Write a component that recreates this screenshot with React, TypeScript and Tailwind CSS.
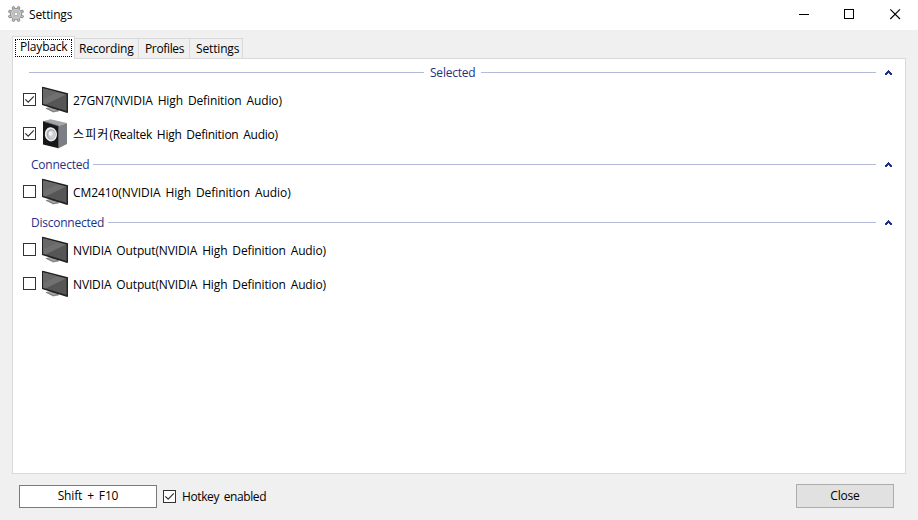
import React from "react";

function Gear() {
  return (
    <svg width="16" height="16" viewBox="0 0 16 16" className="block shrink-0">
      <g fill="#c6c6c6" stroke="#7c7c7c" strokeWidth="0.7">
        {[22.5, 67.5, 112.5, 157.5, 202.5, 247.5, 292.5, 337.5].map((a) => (
          <path key={a} d="M6.6 3.2 L6.9 .3 H9.1 L9.4 3.2Z" transform={`rotate(${a} 8 8)`} />
        ))}
        <circle cx="8" cy="8" r="5.5" />
      </g>
      <circle cx="8" cy="8" r="5.2" fill="#cacaca" />
      <circle cx="8" cy="8" r="3.3" fill="#dedede" stroke="#a5a5a5" strokeWidth="0.7" />
      <circle cx="8" cy="8" r="1.9" fill="#fff" stroke="#8c8c8c" strokeWidth="0.8" />
    </svg>
  );
}

function Monitor() {
  return (
    <svg width="26" height="28" viewBox="0 0 26 28" className="block shrink-0">
      <path d="M3.5 22.2 L9 20.6 L17.5 23.4 L16.5 25.4 L11 26.4Z" fill="#a6a6a6" />
      <path d="M4 22.3 L11.3 25.4 L16.5 24.6" fill="none" stroke="#6c6c6c" strokeWidth="0.8" />
      <path d="M9 19 L15 21 V23.4 L9 22Z" fill="#4a4a4a" />
      <path d="M0 .9 L.8 .8 L26 7.2 V26.4 L25.2 26.9 L0 18.9Z" fill="#222" />
      <path d="M1.2 2.5 L24.6 8.5 V25 L1.2 17.7Z" fill="#565656" />
      <path d="M1.2 2.5 L24 8.4 L3.5 18.4 L1.2 17.7Z" fill="#707070" />
      <path d="M1.2 2.5 L16 6.3 L1.2 13Z" fill="#686868" />
    </svg>
  );
}

function Speaker() {
  return (
    <svg width="26" height="30" viewBox="0 -1 26 30" className="block shrink-0">
      <path d="M1 1.2 L8.5 -.8 L25 3 L16.5 6Z" fill="#a3a5aa" />
      <path d="M16.5 6 L25 3 V24 L16.5 28.2Z" fill="#7c7e85" />
      <path d="M1 1.2 L16.5 6 V28.2 L1 24.4Z" fill="#171717" />
      <path d="M1 1.2 L16.5 6 V28.2" fill="none" stroke="#55575c" strokeWidth="0.7" />
      <ellipse cx="8.9" cy="14.3" rx="6.1" ry="7.1" fill="#e9ebed" transform="rotate(-8 8.9 14.3)" />
      <ellipse cx="9.1" cy="14.2" rx="4.5" ry="5.3" fill="#a9adb2" />
      <ellipse cx="9.7" cy="14.6" rx="3.5" ry="4.2" fill="#ced1d4" />
      <ellipse cx="8.6" cy="13.6" rx="1.9" ry="2.3" fill="#f2f3f4" />
    </svg>
  );
}

function Check({ on = false }: { on?: boolean }) {
  return (
    <span className="block h-[13px] w-[13px] shrink-0 border border-[#333] bg-white">
      {on && (
        <svg width="11" height="11" viewBox="0 0 11 11" className="block">
          <path d="M1.3 5.3 L4.2 8.2 L9.8 2.4" fill="none" stroke="#333" strokeWidth="1.2" />
        </svg>
      )}
    </span>
  );
}

function Chevron() {
  return (
    <svg width="7" height="5" viewBox="0 0 7 5" shapeRendering="crispEdges" className="block shrink-0" fill="#1e3287">
      <path d="M3 0H4V1H5V2H6V3H7V5H5V4H4V3H3V4H2V5H0V3H1V2H2V1H3Z" />
    </svg>
  );
}

function Header({ label, track, centered = false }: { label: string; track: string; centered?: boolean }) {
  return (
    <div className="flex h-6 items-center pt-[3px] pr-[13px] pl-4 text-[#1e3287]">
      {centered && <span className="h-px w-[395px] bg-[#b5b9da]" />}
      <span className={`whitespace-nowrap ${centered ? "w-[57px] pl-1.5" : "pl-0.5 pr-1"} ${track}`}>{label}</span>
      <span className="mr-[9px] h-px flex-1 bg-[#b5b9da]" />
      <Chevron />
    </div>
  );
}

function Row({ label, track, on = false, speaker = false }: { label: React.ReactNode; track: string; on?: boolean; speaker?: boolean }) {
  return (
    <div className="flex h-[34px] items-center pl-2.5">
      <span className="mb-0.5">
        <Check on={on} />
      </span>
      <span className="ml-1.5 mr-[5px]">{speaker ? <Speaker /> : <Monitor />}</span>
      <span className={`whitespace-nowrap pt-px [word-spacing:2px] ${track}`}>{label}</span>
    </div>
  );
}

export default function App() {
  return (
    <div className="flex h-[520px] w-[918px] flex-col overflow-hidden bg-[#f0f0f0] font-['Open_Sans','Noto_Sans_CJK_KR',sans-serif] text-[12px] leading-4 text-black">
      <header className="flex h-[30px] shrink-0 items-center bg-white pl-2">
        <span className="mb-0.5">
          <Gear />
        </span>
        <span className="ml-[5px] tracking-[-0.15px]">Settings</span>
        <svg width="102" height="10" viewBox="0 0 102 10" className="mr-[17px] mb-0.5 ml-auto block overflow-visible" fill="none" stroke="#000">
          <path d="M0 5.5H10M45.5 .5H54.5V9.5H45.5Z" shapeRendering="crispEdges" />
          <path d="M91.3 .3L101 10M101 .3L91.3 10" strokeWidth="1.1" />
        </svg>
      </header>
      <nav className="flex h-[29px] shrink-0 items-end pl-3">
        <div className="z-10 flex h-[23px] w-[63px] border border-b-0 border-[#d9d9d9] bg-white px-0.5 pt-0.5">
          <span className="h-[18px] w-[57px] border border-dotted border-black pl-1 leading-[14px] tracking-[-0.2px]">Playback</span>
        </div>
        <div className="mr-3 flex h-[21px] flex-1 border-b border-[#d9d9d9]">
          <span className="w-16 border-t border-r border-[#d9d9d9] pl-1 leading-[19px] tracking-[-0.2px]">Recording</span>
          <span className="w-[51px] border-t border-r border-[#d9d9d9] pl-1.5 leading-[19px] tracking-[-0.35px]">Profiles</span>
          <span className="w-[53px] border-t border-r border-[#d9d9d9] pl-1.5 leading-[19px] tracking-[-0.15px]">Settings</span>
        </div>
      </nav>
      <main className="mx-3 h-[415px] shrink-0 border border-t-0 border-[#d9d9d9] bg-white">
        <Header label="Selected" track="tracking-[-0.22px]" centered />
        <Row label="27GN7(NVIDIA High Definition Audio)" track="tracking-[-0.12px]" on />
        <Row
          label={
            <>
              <span className="tracking-[1.1px]">스피커</span>(Realtek High Definition Audio)
            </>
          }
          track="tracking-[-0.27px]"
          on
          speaker
        />
        <Header label="Connected" track="tracking-[-0.22px]" />
        <Row label="CM2410(NVIDIA High Definition Audio)" track="tracking-[-0.08px]" />
        <Header label="Disconnected" track="tracking-[-0.25px]" />
        <Row label="NVIDIA Output(NVIDIA High Definition Audio)" track="tracking-[-0.14px]" />
        <Row label="NVIDIA Output(NVIDIA High Definition Audio)" track="tracking-[-0.14px]" />
      </main>
      <footer className="flex items-start pt-2.5 pr-6 pl-[19px]">
        <div className="mt-px h-[23px] w-[138px] border border-[#7a7a7a] bg-white text-center leading-5 tracking-[-0.15px] [word-spacing:2px]">Shift + F10</div>
        <label className="mt-1.5 ml-1.5 flex">
          <Check on />
          <span className="ml-1.5 leading-[14px] tracking-[-0.4px] [word-spacing:2px]">Hotkey enabled</span>
        </label>
        <button className="ml-auto h-6 w-[98px] border border-[#adadad] bg-[#e1e1e1] leading-[22px] tracking-[-0.2px]">Close</button>
      </footer>
    </div>
  );
}
